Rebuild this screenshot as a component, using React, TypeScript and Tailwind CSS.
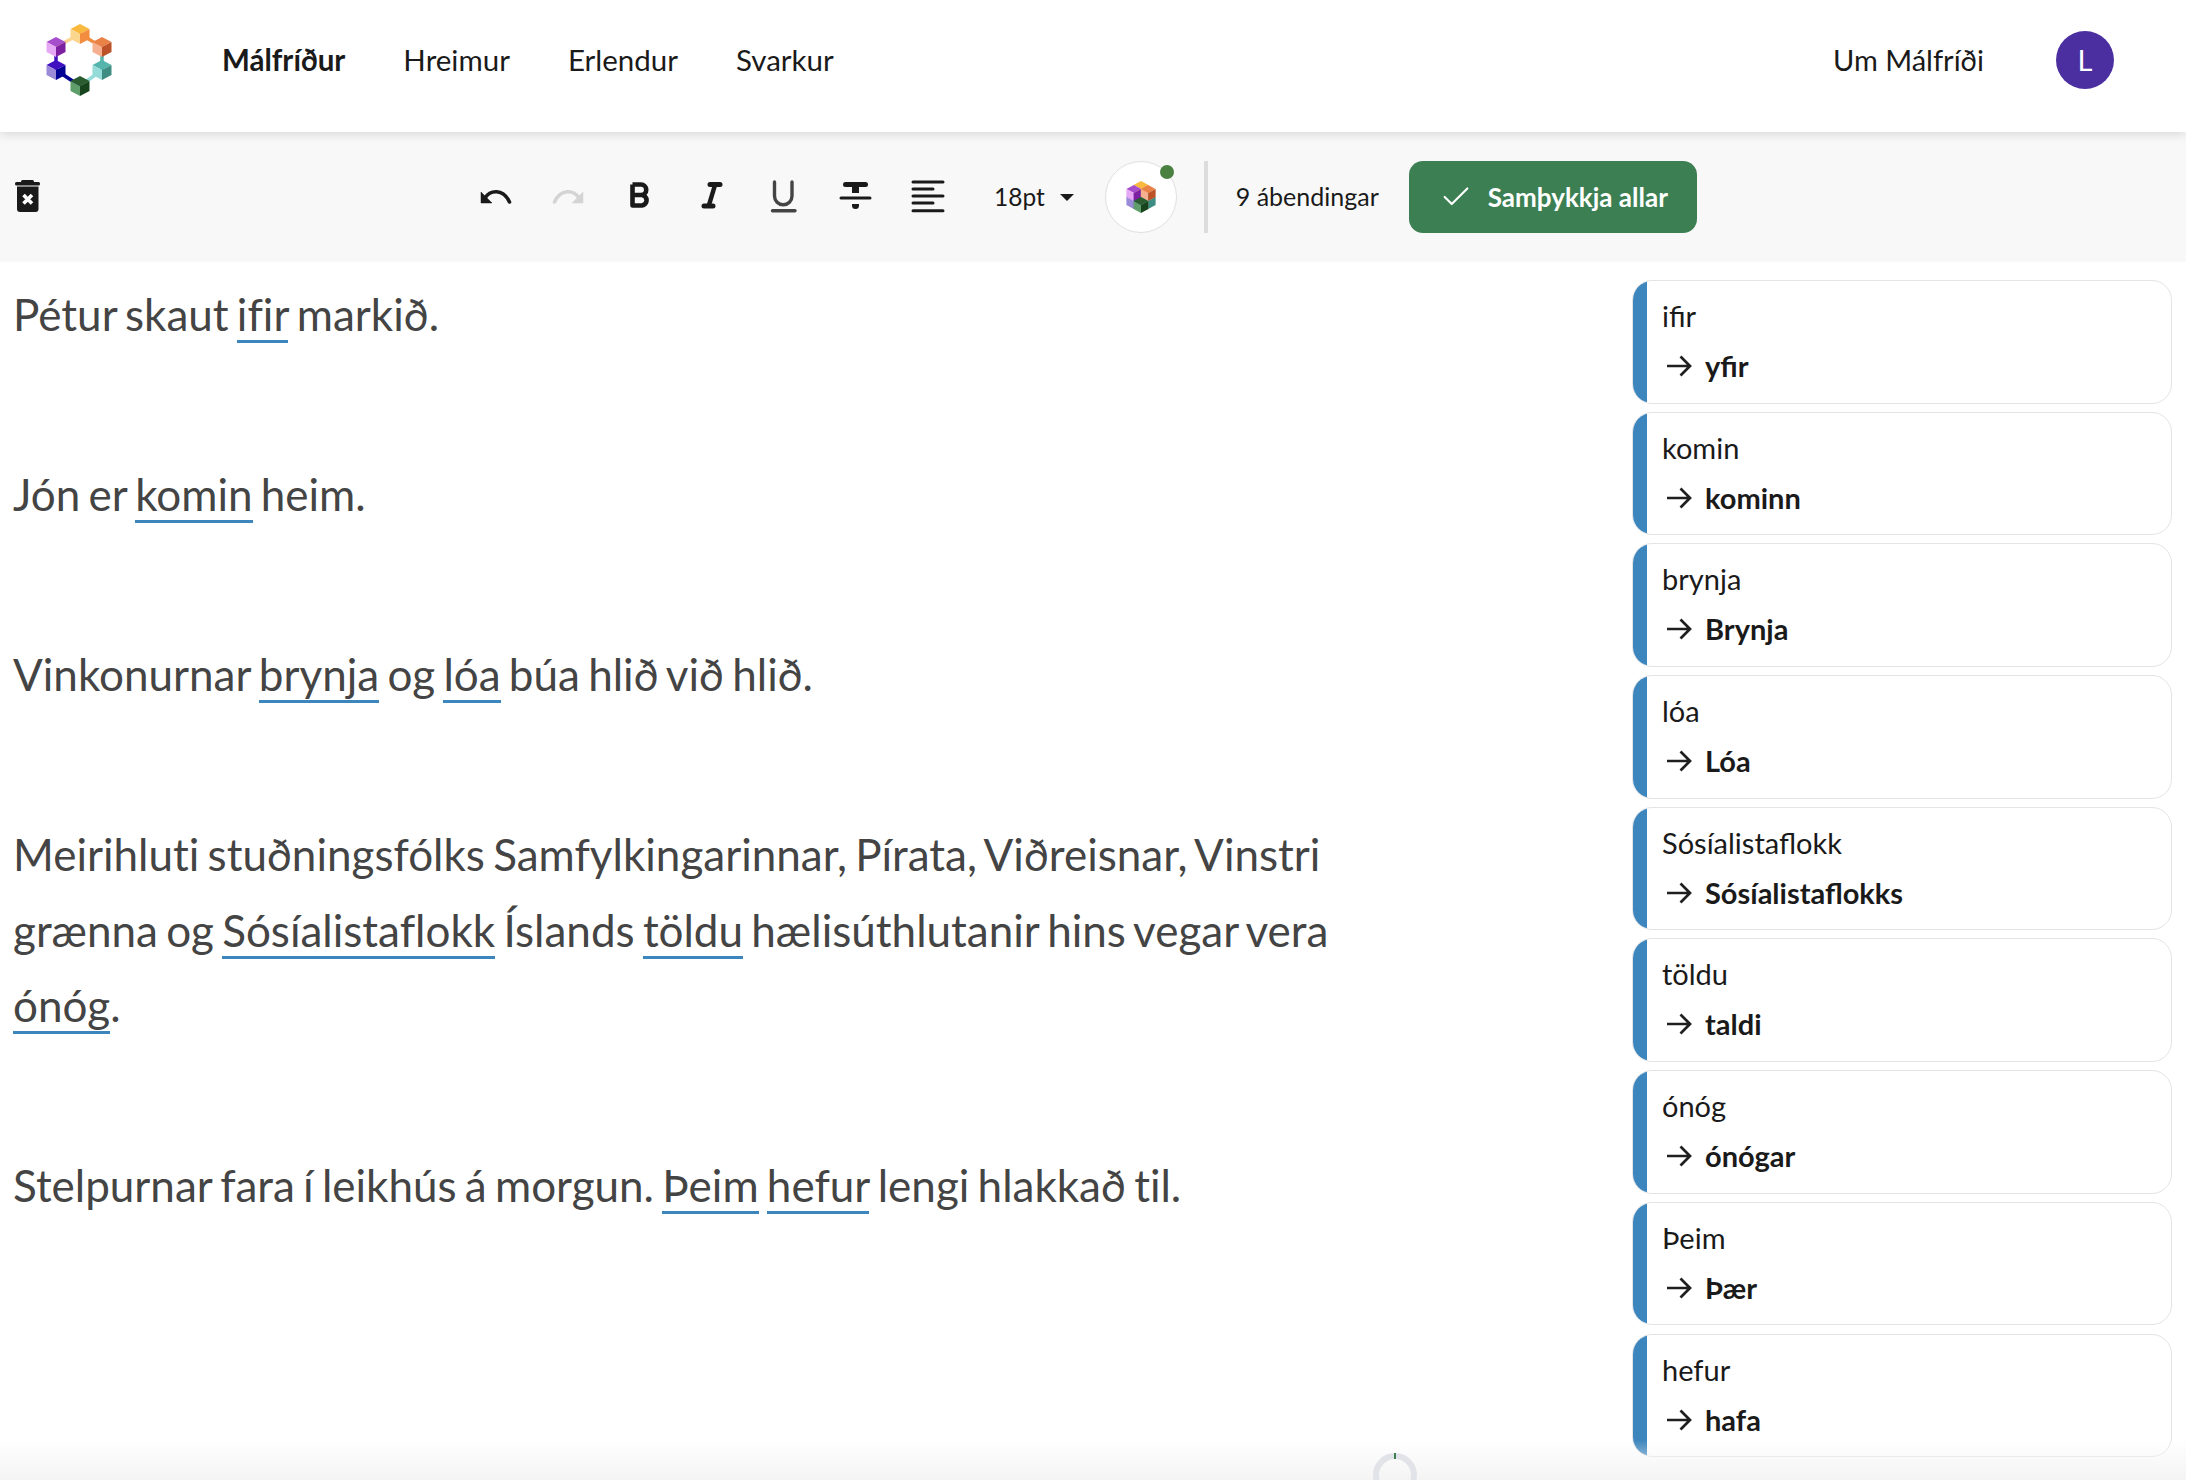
import React from "react";
import { Check } from "lucide-react";

type CubeDef = { x: number; y: number; t: string; l: string; r: string };

function Cube({ x, y, t, l, r, w, h }: CubeDef & { w: number; h: number }) {
  const q = h / 2;
  return (
    <g>
      <polygon points={`${x},${y - h} ${x + w},${y - q} ${x},${y} ${x - w},${y - q}`} fill={t} />
      <polygon points={`${x - w},${y - q} ${x},${y} ${x},${y + h} ${x - w},${y + q}`} fill={l} />
      <polygon points={`${x},${y} ${x + w},${y - q} ${x + w},${y + q} ${x},${y + h}`} fill={r} />
    </g>
  );
}

const COLORS = {
  top: { t: "#f9b93e", l: "#fad68f", r: "#f28c3f" },
  tr: { t: "#ea8248", l: "#f4b08f", r: "#bd5127" },
  br: { t: "#55b5ad", l: "#95dcd8", r: "#3e8d82" },
  b: { t: "#2a5c2f", l: "#5f9e6a", r: "#17441c" },
  bl: { t: "#4010c0", l: "#9a8ad8", r: "#010094" },
  tl: { t: "#a64dcb", l: "#e6a8f5", r: "#7c1fa0" },
};

function Logo() {
  return (
    <svg width="80" height="84" viewBox="0 0 80 84" className="shrink-0">
      <g strokeWidth="3.5">
        <line x1="40" y1="16" x2="16" y2="29" stroke="#fad68f" />
        <line x1="40" y1="16" x2="62" y2="29" stroke="#f28c3f" />
        <line x1="62" y1="29" x2="62" y2="52" stroke="#55b5ad" />
        <line x1="62" y1="52" x2="40" y2="68" stroke="#95dcd8" />
        <line x1="16" y1="52" x2="40" y2="68" stroke="#010094" />
        <line x1="16" y1="29" x2="16" y2="52" stroke="#4010c0" />
      </g>
      <Cube x={40} y={16} w={9.5} h={10} {...COLORS.top} />
      <Cube x={62} y={29} w={9.5} h={10} {...COLORS.tr} />
      <Cube x={62} y={52} w={9.5} h={10} {...COLORS.br} />
      <Cube x={16} y={29} w={9.5} h={10} {...COLORS.tl} />
      <Cube x={16} y={52} w={9.5} h={10} {...COLORS.bl} />
      <Cube x={40} y={68} w={9.5} h={10} {...COLORS.b} />
    </svg>
  );
}

function SmallLogo() {
  return (
    <svg width="32" height="34" viewBox="-16 -17 32 34">
      <Cube x={0} y={-8} w={7.4} h={8} {...COLORS.top} />
      <Cube x={-7.2} y={4} w={7.4} h={8} {...COLORS.bl} />
      <Cube x={7.2} y={4} w={7.4} h={8} {...COLORS.br} />
      <Cube x={-7.2} y={-4} w={7.4} h={8} {...COLORS.tl} />
      <Cube x={7.2} y={-4} w={7.4} h={8} {...COLORS.tr} />
      <Cube x={0} y={8} w={7.4} h={8} {...COLORS.b} />
    </svg>
  );
}

function TrashIcon() {
  return (
    <svg width="36" height="36" viewBox="0 0 36 36" fill="#1a1a1a">
      <rect x="11" y="1" width="13" height="3" rx="1.5" />
      <rect x="5" y="3" width="25" height="3.5" rx="1.5" />
      <path d="M7 7.5H28.5V30a3 3 0 0 1-3 3H10a3 3 0 0 1-3-3Z" />
      <path d="M13.5 16L22 24.5M22 16L13.5 24.5" stroke="#fff" strokeWidth="3.6" fill="none" />
    </svg>
  );
}

function IconBox({ children }: { children: React.ReactNode }) {
  return <div className="flex h-[72px] w-[72px] items-center justify-center">{children}</div>;
}

function Undo({ color = "#1a1a1a", flip = false }: { color?: string; flip?: boolean }) {
  return (
    <svg width="36" height="36" viewBox="0 0 36 36" className={flip ? "-scale-x-100" : ""}>
      <path d="M3 13V24H14Z" fill={color} stroke={color} strokeWidth="0.5" />
      <path d="M7 19C12 11 25 9 31.5 23" fill="none" stroke={color} strokeWidth="3.6" strokeLinecap="round" />
    </svg>
  );
}

function BoldIcon() {
  return (
    <svg width="36" height="36" viewBox="0 0 36 36" fill="none" stroke="#1a1a1a" strokeWidth="4.6" strokeLinejoin="round">
      <path d="M10.5 5.5h8.5a5.2 5.2 0 0 1 0 10.5h-8.5M10.5 16h9.5a5.3 5.3 0 0 1 0 10.5h-9.5V5.5" />
    </svg>
  );
}

function ItalicIcon() {
  return (
    <svg width="36" height="36" viewBox="0 0 36 36" fill="none" stroke="#1a1a1a" strokeLinecap="round">
      <path d="M16 5.5H26M10 27H19" strokeWidth="5" />
      <path d="M21 6L15 26" strokeWidth="4.4" strokeLinecap="butt" />
    </svg>
  );
}

function UnderlineIcon() {
  return (
    <svg width="36" height="36" viewBox="0 0 36 36" fill="none" stroke="#444" strokeWidth="3.4" strokeLinecap="round">
      <path d="M8.5 3V17a8.75 8.75 0 0 0 17.5 0V3" />
      <path d="M6.5 31.7H29" />
    </svg>
  );
}

function StrikeIcon() {
  return (
    <svg width="36" height="36" viewBox="0 0 36 36" fill="#1a1a1a" stroke="none">
      <rect x="5" y="3" width="25" height="5" rx="2.5" />
      <rect x="14" y="5" width="7" height="9" />
      <rect x="1.5" y="17.5" width="32" height="3" rx="1.5" />
      <path d="M14 25H21V26.5a3.5 3.5 0 0 1-7 0Z" />
    </svg>
  );
}

function AlignIcon() {
  return (
    <svg width="36" height="36" viewBox="0 0 36 36" fill="none" stroke="#1a1a1a" strokeWidth="3" strokeLinecap="round">
      <path d="M3 3H33M3 10H23M3 17H33M3 24H23M3 31.7H33" />
    </svg>
  );
}

function ArrowIcon() {
  return (
    <svg width="26" height="24" viewBox="0 0 26 24" fill="none" stroke="#1f1f1f" strokeWidth="2.7" className="shrink-0">
      <path d="M1 12H24M14.5 2.5L24 12L14.5 21.5" />
    </svg>
  );
}

function Err({ children }: { children: React.ReactNode }) {
  return <span className="border-b-[3px] border-[#3d85bd]">{children}</span>;
}

const SUGGESTIONS: [string, string][] = [
  ["ifir", "yfir"],
  ["komin", "kominn"],
  ["brynja", "Brynja"],
  ["lóa", "Lóa"],
  ["Sósíalistaflokk", "Sósíalistaflokks"],
  ["töldu", "taldi"],
  ["ónóg", "ónógar"],
  ["Þeim", "Þær"],
  ["hefur", "hafa"],
];

export default function App() {
  return (
    <div className="relative flex h-[1480px] flex-col overflow-hidden bg-white font-['Lato',sans-serif] text-[#1a1a1a]">
      <header className="relative z-10 flex h-[132px] shrink-0 items-center bg-white pb-[12px] pl-[40px] pr-[72px] shadow-[0_2px_10px_rgba(0,0,0,0.14)]">
        <Logo />
        <nav className="ml-[102px] flex items-center gap-[58px] text-[29.5px]">
          <span className="font-bold">Málfríður</span>
          <span>Hreimur</span>
          <span>Erlendur</span>
          <span>Svarkur</span>
        </nav>
        <span className="ml-auto text-[29px]">Um Málfríði</span>
        <div className="ml-[72px] flex h-[58px] w-[58px] items-center justify-center rounded-full bg-[#4b2fa0] text-[29px] text-white">
          L
        </div>
      </header>

      <div className="flex h-[130px] shrink-0 items-center bg-[#f8f8f8] pl-[10px]">
        <TrashIcon />
        <div className="ml-[414px] flex items-center">
          <IconBox><Undo /></IconBox>
          <IconBox><Undo color="#d4d4d4" flip /></IconBox>
          <IconBox><BoldIcon /></IconBox>
          <IconBox><ItalicIcon /></IconBox>
          <IconBox><UnderlineIcon /></IconBox>
          <IconBox><StrikeIcon /></IconBox>
          <IconBox><AlignIcon /></IconBox>
        </div>
        <span className="ml-[30px] text-[24.5px]">18pt</span>
        <div className="ml-[15px] h-0 w-0 border-x-[7px] border-t-[7px] border-x-transparent border-t-[#1a1a1a]" />
        <div className="relative ml-[31px] flex h-[72px] w-[72px] items-center justify-center rounded-full border border-[#e0e0e0] bg-white">
          <SmallLogo />
          <div className="absolute right-[2px] top-[3px] h-[14px] w-[14px] rounded-full bg-[#4a8040]" />
        </div>
        <div className="ml-[27px] h-[72px] w-[4px] bg-[#dcdcdc]" />
        <span className="ml-[28px] text-[25px]">9 ábendingar</span>
        <button className="ml-[30px] flex h-[72px] w-[288px] items-center rounded-[14px] bg-[#3c7f53] pl-[30px] text-[26px] font-bold text-white">
          <Check size={34} strokeWidth={1.5} />
          <span className="ml-[15px]">Samþykkja allar</span>
        </button>
      </div>

      <main className="flex min-h-0 flex-1 items-start justify-between pl-[13px] pr-[14px]">
        <div className="w-[1340px] pt-[15px] text-[44px] leading-[75.7px] text-[#444] [font-variant-ligatures:none] [word-spacing:-3px]">
          <p className="mb-[104.3px]">Pétur skaut <Err>ifir</Err> markið.</p>
          <p className="mb-[104.3px]">Jón er <Err>komin</Err> heim.</p>
          <p className="mb-[104.3px]">Vinkonurnar <Err>brynja</Err> og <Err>lóa</Err> búa hlið við hlið.</p>
          <p className="mb-[104.3px]">
            Meirihluti stuðningsfólks Samfylkingarinnar, Pírata, Viðreisnar, Vinstri grænna og <Err>Sósíalistaflokk</Err> Íslands <Err>töldu</Err> hælisúthlutanir hins vegar vera <Err>ónóg</Err>.
          </p>
          <p>Stelpurnar fara í leikhús á morgun. <Err>Þeim</Err> <Err>hefur</Err> lengi hlakkað til.</p>
        </div>
        <aside className="mt-[18px] flex w-[540px] shrink-0 flex-col gap-[8.1px]">
          {SUGGESTIONS.map(([from, to]) => (
            <div key={from} className="flex h-[123.6px] overflow-hidden rounded-[20px] border border-[#e4e4e7]">
              <div className="w-[14px] shrink-0 bg-[#3d85bd]" />
              <div className="flex-1 pl-[15px] pt-[10px] text-[29px] leading-[50px]">
                <div>{from}</div>
                <div className="flex items-center pl-[4px]">
                  <ArrowIcon />
                  <span className="ml-[13px] font-bold">{to}</span>
                </div>
              </div>
            </div>
          ))}
        </aside>
      </main>

      <div className="absolute inset-x-0 bottom-0 h-[40px] bg-gradient-to-b from-transparent to-[#f4f4f4]" />
      <div className="absolute left-[1373px] top-[1453px] h-[44px] w-[44px] rounded-full border-[6px] border-[#e2e3e8]">
        <div className="absolute -top-[6px] left-[14.5px] h-[6px] w-[2px] bg-[#3c7f53]" />
      </div>
    </div>
  );
}
